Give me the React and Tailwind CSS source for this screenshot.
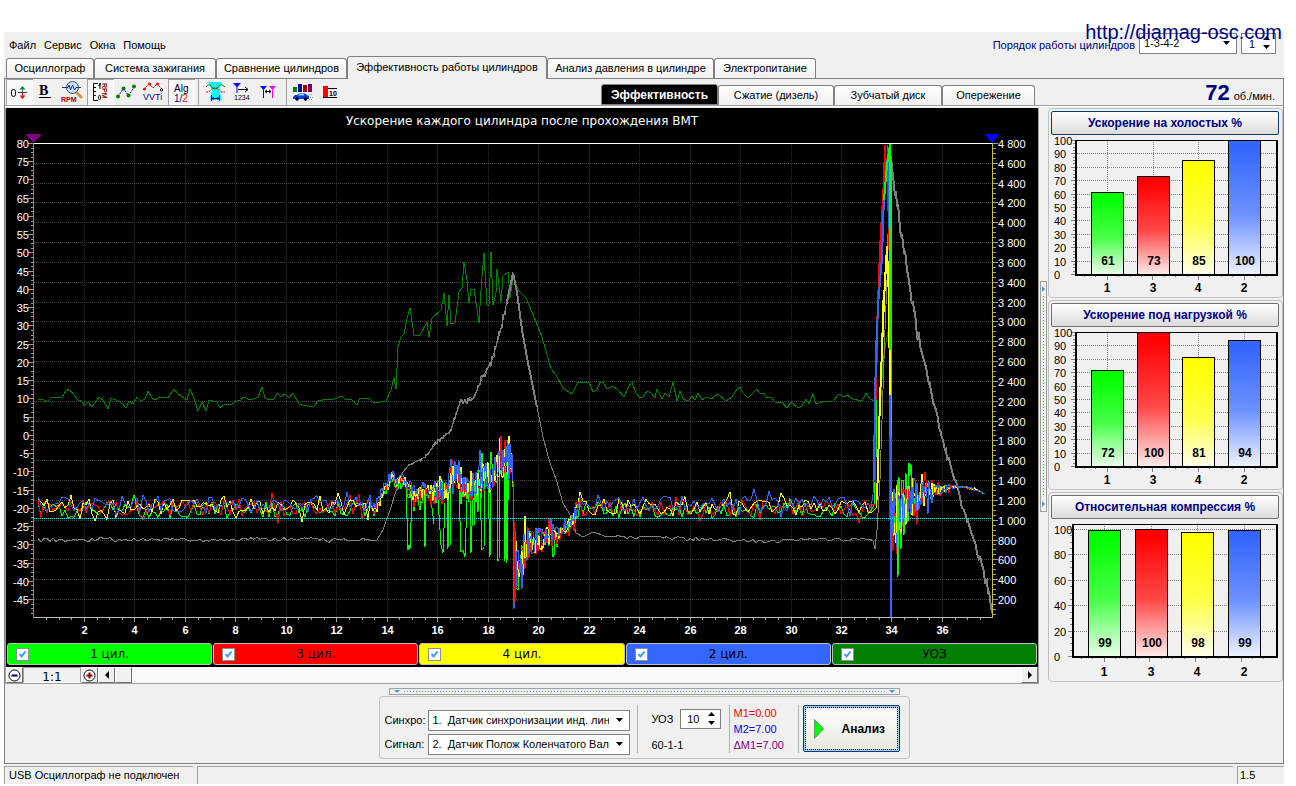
const COLORS = {
  green: '#00ff00',
  red: '#ff0000',
  yellow: '#ffff00',
  blue: '#3366ff',
  advance: '#008000',
  rpm: '#808080'
};

// Repeatable noise, so that every render draws the same signal
const createRandom = (seed) => {
  let state = seed;
  return () => {
    state = (state * 16807) % 2147483647;
    return state / 2147483647;
  };
};

// Linear interpolation between keys of the form [x, mean, amplitude]
const interpolate = (keys, x) => {
  let i = 1;
  while (i < keys.length - 1 && keys[i][0] < x) i += 1;
  const a = keys[i - 1];
  const b = keys[i];
  const t = Math.min(1, Math.max(0, (x - a[0]) / (b[0] - a[0])));
  return [a[1] + (b[1] - a[1]) * t, a[2] + (b[2] - a[2]) * t];
};

const buildNoise = (seed, keys, step) => {
  const random = createRandom(seed);
  const points = [];
  const end = keys[keys.length - 1][0];
  for (let x = keys[0][0]; x <= end; x += step) {
    const [mean, amp] = interpolate(keys, x);
    // mostly small moves and now and then a spike
    const r = random() * 2 - 1;
    const spike = random() > 0.86 ? 1.7 : 0.9;
    points.push(`${x.toFixed(1)},${(mean + r * amp * spike).toFixed(1)}`);
  }
  return points.join(' ');
};

const idle = [[38, 507, 9], [368, 507, 9]];
const rise = [
  [370, 506, 5], [374, 511, 4], [382, 494, 5], [393, 474, 5], [397, 486, 4], [400, 478, 4], [408, 488, 7],
  [418, 497, 10], [425, 491, 8], [437, 491, 9], [448, 492, 10], [451, 470, 16], [457, 475, 14], [463, 486, 10],
  [470, 491, 12], [477, 484, 17], [485, 475, 18], [492, 479, 18], [498, 464, 16], [512, 462, 18]
];
const fall = [
  [513, 500, 20], [514, 560, 36], [517, 565, 30], [521, 560, 24], [527, 545, 21], [537, 541, 13], [550, 535, 12],
  [557, 536, 9], [567, 526, 7], [573, 521, 7], [578, 508, 8]
];
const load = [[580, 507, 9], [873, 507, 9]];
const settle = [
  [892, 530, 34], [896, 518, 46], [900, 510, 40], [905, 500, 32], [912, 498, 24], [920, 496, 16], [928, 492, 13],
  [935, 490, 7], [945, 488, 4], [955, 487, 2], [965, 487, 1], [975, 489, 1], [985, 494, 0]
];

const shift = (keys, dy) => keys.map(([x, mean, amp]) => [x, mean + dy, amp]);

const buildCylinder = (seed, dy, peak) => [
  buildNoise(seed, shift(idle, dy), 3),
  buildNoise(seed + 11, shift(rise, dy), 1),
  buildNoise(seed + 23, shift(fall, dy), 1),
  buildNoise(seed + 37, shift(load, dy), 3),
  peak,
  buildNoise(seed + 53, settle, 1)
].join(' ');

const cylinderCurves = [
  {
    color: COLORS.green,
    points: buildCylinder(7411, 3, '874,505 876,460 877,345 880,260 882,245 883,200 885,190 887,160 889,200 890,143 891,160 891,540')
  },
  {
    color: COLORS.red,
    points: buildCylinder(1973, 1, '875,505 876,400 877,330 879,290 880,245 883,225 884,180 885,145 887,170 889,250 890,520 891,603')
  },
  {
    color: COLORS.yellow,
    points: buildCylinder(3019, 0, '876,508 878,470 880,400 883,300 884,290 886,255 887,246 889,290 890,397 891,520')
  },
  {
    color: COLORS.blue,
    points: buildCylinder(5227, -3, '873,494 875,392 876,340 878,305 881,258 883,195 885,182 886,160 887,175 888,145 890,300 891,617')
  }
];

// Ignition failures of the first cylinder: short drops under load
const dropouts = [
  '406,485 408,550 409,545 410,549 412,496', '424,492 425,547 426,495', '438,500 441,545 443,553 445,503',
  '447,490 448,549 449,480', '450,470 450,545', '459,490 461,552 463,550 465,557 467,500', '470,490 471,553 473,500',
  '480,490 482,550 484,548 485,470', '488,480 490,557 491,480', '497,470 498,560 499,560 500,468',
  '504,450 505,561 506,470 507,563 508,440 509,500', '474,480 475,525', '431,500 434,524'
];

const advancePoints =
  '38,399 43,399 47,402 51,398 62,397 66,391 69,389 74,395 78,400 82,401 84,406 88,402 92,407 99,397 103,400 108,409 ' +
  '111,398 118,401 123,404 126,408 129,401 133,404 137,397 141,401 145,399 148,391 152,398 155,400 160,397 168,398 ' +
  '174,389 178,394 187,400 190,389 194,398 198,411 202,402 206,411 209,400 217,402 220,408 224,405 232,404 237,401 ' +
  '241,400 243,397 251,400 258,397 262,387 265,398 269,400 274,399 277,393 281,397 285,394 289,398 293,393 299,404 ' +
  '307,406 314,406 318,401 327,399 334,399 342,396 345,399 352,400 357,405 360,398 369,398 374,403 386,401 391,390 ' +
  '394,378 396,389 398,347 401,337 404,334 407,318 410,308 414,335 420,335 427,322 429,337 432,318 441,310 444,293 ' +
  '447,326 449,295 451,324 455,323 459,292 462,288 464,262 467,280 469,303 471,289 474,289 479,323 481,290 484,253 ' +
  '487,305 489,305 491,252 493,305 496,293 497,269 501,302 503,276 508,272 510,298 513,278 519,291 526,298 532,312 ' +
  '542,337 551,369 556,375 563,388 572,394 578,382 589,382 593,392 597,390 600,382 603,382 607,389 613,386 618,390 ' +
  '624,397 629,386 632,382 636,393 640,398 643,397 647,391 651,393 655,398 657,389 662,399 665,393 669,397 673,382 ' +
  '677,401 680,391 683,399 688,401 692,396 695,400 698,393 702,400 707,397 711,399 718,394 726,401 732,397 737,389 ' +
  '740,387 743,393 748,398 757,389 760,393 764,393 767,398 771,397 775,402 782,402 787,408 791,402 798,408 802,406 ' +
  '806,399 809,404 813,394 816,404 826,401 833,401 839,394 844,397 847,395 853,399 862,401 866,393 870,399 875,401 ' +
  '877,414 879,414 881,396 883,362 886,342 888,332 890,325';

const rpmPoints = [
  buildNoise(811, [[38, 540, 2], [372, 539, 2]], 3),
  '377,540 383,530 390,510 397,488 403,472 408,466 413,463 425,457 438,441 450,432 460,403 462,400 463,404 465,399 ' +
    '467,404 469,398 471,401 474,398 482,378 491,363 500,333 507,302 513,273 517,292 522,330 528,363 537,407 543,437 ' +
    '550,463 557,482 563,503 572,518 576,533 583,537 593,532',
  buildNoise(977, [[597, 535, 2], [660, 538, 2], [740, 540, 2], [770, 542, 2], [790, 539, 2], [873, 540, 2]], 3),
  '875,549 877,530 880,480 882,420 885,330 887,280 890,143 891,159'
].join(' ');

// The thicker parts, where the speed ripples around its trend
const runUpPoints = buildNoise(
  607,
  [
    [408, 466, 2], [425, 457, 2], [438, 441, 3], [450, 432, 2], [460, 403, 3], [462, 401, 4], [474, 398, 3],
    [482, 378, 3], [491, 363, 5], [500, 333, 6], [507, 302, 8], [513, 275, 4]
  ],
  1
);

const coastPoints = buildNoise(
  1291,
  [
    [891, 159, 3], [895, 190, 7], [900, 223, 7], [905, 257, 6], [912, 299, 6], [918, 335, 5], [927, 372, 4],
    [935, 409, 4], [943, 440, 4], [950, 463, 3], [957, 487, 3], [962, 506, 2], [972, 533, 3], [980, 561, 5],
    [987, 585, 8], [992, 613, 2]
  ],
  1
);

const toX = (time) => Math.round(33.5 + time * 25.235) + 0.5;
const toY = (value) => Math.round(143 + (80 - value) * 3.648) + 0.5;
const rpmToY = (rpm) => Math.round(143 + (4800 - rpm) * 0.09913) + 0.5;
const range = (from, to, step) => {
  const list = [];
  for (let v = from; v <= to + 0.001; v += step) list.push(v);
  return list;
};
const formatRpm = (rpm) => (rpm >= 1000 ? `${Math.floor(rpm / 1000)} ${String(rpm % 1000).padStart(3, '0')}` : rpm);

function MainChart() {
  return (
    <svg viewBox="6 108 1032 535" className="block w-full bg-black font-['Liberation_Sans',sans-serif]">
      <text x="522" y="125" textAnchor="middle" fill="#fff" className="text-[12px] font-['DejaVu_Sans',sans-serif]">
        Ускорение каждого цилиндра после прохождения ВМТ
      </text>

      {/* Grid */}
      <g stroke="#484848" strokeDasharray="1 1" shapeRendering="crispEdges">
        {range(200, 4600, 200).map((v) => (
          <line key={v} x1="34" x2="992" y1={rpmToY(v)} y2={rpmToY(v)} />
        ))}
      </g>
      <g stroke="#303030" strokeDasharray="1 1" shapeRendering="crispEdges">
        {range(2, 36, 2).map((v) => (
          <line key={v} x1={toX(v)} x2={toX(v)} y1="144" y2="617" />
        ))}
      </g>

      {/* Curves */}
      <g fill="none" shapeRendering="crispEdges">
        <polyline points={advancePoints} stroke={COLORS.advance} />
        <polyline points={rpmPoints} stroke={COLORS.rpm} />
        <polyline points={runUpPoints} stroke={COLORS.rpm} />
        <polyline points="507,302 513,273 517,292 522,330 528,363 537,407" stroke={COLORS.rpm} strokeWidth="2" />
        <polyline points={coastPoints} stroke={COLORS.rpm} strokeWidth="2" />
        {dropouts.map((points) => (
          <polyline key={points} points={points} stroke={COLORS.green} />
        ))}
        {cylinderCurves.map((curve) => (
          <polyline key={curve.color} points={curve.points} stroke={curve.color} />
        ))}
        <polyline points="500,470 501,436 502,460" stroke={COLORS.red} />
        <polyline points="514,520 515,602 516,560" stroke={COLORS.red} />
        <polyline points="876,400 877,330 880,250 884,180 885,145" stroke={COLORS.red} strokeWidth="2" />
        <polyline points="874,480 875,392 878,305 882,258 884,195 888,160 890,250 891,617" stroke={COLORS.blue} strokeWidth="2" />
        <polyline points="877,500 880,400 884,300 887,248 889,300 890,395" stroke={COLORS.yellow} strokeWidth="2" />
        <polyline points="884,200 887,165 890,145 890,350" stroke={COLORS.green} strokeWidth="2" />
        <polyline points="897,480 898,577 899,500" stroke={COLORS.green} />
        <polyline points="923,490 925,472 927,488" stroke={COLORS.red} />
        <line x1="34" x2="992" y1="518.5" y2="518.5" stroke="#00ffff" strokeDasharray="1 1" />
      </g>

      {/* Axes */}
      <g shapeRendering="crispEdges" stroke="#a0a0a0">
        <line x1="34" x2="993" y1="143.5" y2="143.5" stroke="#fff" />
        <line x1="33" x2="993" y1="617.5" y2="617.5" stroke="#c0c0c0" />
        {range(-48.75, 80, 1.25).map((v) => (
          <line key={v} x1={v % 5 === 0 ? 28 : 31} x2="33" y1={toY(v)} y2={toY(v)} />
        ))}
        {range(50, 4800, 50).map((v) => (
          <line key={v} x1="993" x2={v % 200 === 0 ? 998 : 996} y1={rpmToY(v)} y2={rpmToY(v)} />
        ))}
        {range(0.5, 37.5, 0.5).map((v) => (
          <line key={v} x1={toX(v)} x2={toX(v)} y1="618" y2={v % 2 === 0 ? 622 : 620} />
        ))}
        <line x1="33.5" x2="33.5" y1="143" y2="618" stroke="#46b446" />
        <line x1="992.5" x2="992.5" y1="143" y2="618" stroke="#c8c03c" />
      </g>
      <polygon points="25,134 42,134 33.5,143" fill="#800080" />
      <polygon points="984,134 1000,134 992,143" fill="#0000ff" />

      {/* Scales */}
      <g fill="#fff" className="text-[11px]">
        {range(-45, 80, 5).map((v) => (
          <text key={v} x="29" y={toY(v) + 4} textAnchor="end">{v}</text>
        ))}
        {range(200, 4800, 200).map((v) => (
          <text key={v} x="998" y={rpmToY(v) + 4}>{formatRpm(v)}</text>
        ))}
        {range(2, 36, 2).map((v) => (
          <text key={v} x={toX(v)} y="634" textAnchor="middle" fontWeight="bold">{v}</text>
        ))}
      </g>
    </svg>
  );
}

const legend = [
  { name: '1 цил.', className: 'bg-[#00ff00]' },
  { name: '3 цил.', className: 'bg-[#ff0000]' },
  { name: '4 цил.', className: 'bg-[#ffff00]' },
  { name: '2 цил.', className: 'bg-[#3366ff]' },
  { name: 'УОЗ', className: 'bg-[#008000]' }
];

function Legend() {
  return (
    <div className="grid grid-cols-5 gap-px bg-black px-px pb-0.5">
      {legend.map((item) => (
        <label
          key={item.name}
          className={`relative flex h-[22px] items-center justify-center rounded-[3px] border border-[#c0c0c0] text-[12px] text-black font-['DejaVu_Sans',sans-serif] ${item.className}`}
        >
          <input
            type="checkbox"
            defaultChecked
            className="peer absolute left-2 size-[13px] appearance-none border border-[#8e8f8f] bg-white"
          />
          <svg viewBox="0 0 13 13" className="pointer-events-none absolute left-2 hidden size-[13px] peer-checked:block">
            <path d="M3.5 6 L5.5 8.5 L9.5 3.5" fill="none" stroke="#3399ff" strokeWidth="2" />
          </svg>
          {item.name}
        </label>
      ))}
    </div>
  );
}

const raised = 'border border-t-white border-l-white border-r-[#707070] border-b-[#707070] bg-[#f0f0f0]';

function ScrollRow() {
  return (
    <div className="flex h-[17px] border-b border-[#a0a0a0] bg-[#f8f8f8]">
      <button aria-label="Уменьшить" className={`flex w-[17px] items-center justify-center ${raised}`}>
        <svg viewBox="0 0 13 13" className="size-[13px] shrink-0">
          <circle cx="6.5" cy="6.5" r="5.5" fill="#fff" stroke="#000" />
          <path d="M3.5 6.5 h6" stroke="#000080" strokeWidth="2" />
        </svg>
      </button>
      <output className="w-[58px] border border-t-[#a0a0a0] border-l-[#a0a0a0] border-r-[#a0a0a0] border-b-white bg-[#f0f0f0] text-center text-[12px] leading-[18px] font-['DejaVu_Sans',sans-serif]">
        1:1
      </output>
      <button aria-label="Увеличить" className={`flex w-[17px] items-center justify-center ${raised}`}>
        <svg viewBox="0 0 13 13" className="size-[13px] shrink-0">
          <circle cx="6.5" cy="6.5" r="5.5" fill="#fff" stroke="#000" />
          <path d="M3.5 6.5 h6 M6.5 3.5 v6" stroke="#800000" strokeWidth="2" />
        </svg>
      </button>
      <button aria-label="Влево" className={`flex w-[17px] items-center justify-center ${raised}`}>
        <svg viewBox="0 0 4 8" className="h-2 w-1"><path d="M4 0 V8 L0 4 Z" /></svg>
      </button>
      <div className={`w-[17px] ${raised}`} />
      <button aria-label="Вправо" className={`ml-auto flex w-[17px] items-center justify-center ${raised}`}>
        <svg viewBox="0 0 4 8" className="h-2 w-1"><path d="M0 0 V8 L4 4 Z" /></svg>
      </button>
    </div>
  );
}

const BAR_COLORS = [COLORS.green, COLORS.red, COLORS.yellow, COLORS.blue];
const CYLINDERS = [1, 3, 4, 2];

const miniCharts = [
  { id: 'idle', title: 'Ускорение на холостых %', values: [61, 73, 85, 100], step: 10, left: 26, centers: [58, 104, 149, 195], zero: 139, hundred: 5, focused: true },
  { id: 'load', title: 'Ускорение под нагрузкой %', values: [72, 100, 81, 94], step: 10, left: 26, centers: [58, 104, 149, 195], zero: 139, hundred: 5 },
  { id: 'compression', title: 'Относительная компрессия %', values: [99, 100, 98, 99], step: 20, left: 23, centers: [55, 102, 148, 195], zero: 137, hundred: 10 }
];

function BarChart({ chart }) {
  const { id, left, centers, zero, hundred, step, values } = chart;
  const top = 5;
  const y = (v) => Math.round(zero - (v * (zero - hundred)) / 100) + 0.5;
  return (
    <svg viewBox="0 0 233 160" className="block w-full font-['Liberation_Sans',sans-serif]">
      <defs>
        {BAR_COLORS.map((color, i) => (
          <linearGradient key={color} id={`${id}-${i}`} x1="0" x2="0" y1="0" y2="1">
            <stop offset="0.05" stopColor={color} />
            <stop offset="0.55" stopColor={color} stopOpacity="0.72" />
            <stop offset="1" stopColor={color} stopOpacity="0.08" />
          </linearGradient>
        ))}
      </defs>
      <g stroke="#808080" shapeRendering="crispEdges">
        <g strokeDasharray="1 1">
          {range(step, 100, step).map((v) => (
            <line key={v} x1={left} x2="227" y1={y(v)} y2={y(v)} />
          ))}
          {centers.map((c) => (
            <line key={c} x1={c + 0.5} x2={c + 0.5} y1={top} y2={zero} />
          ))}
        </g>
        {range(0, 100, step).map((v) => (
          <line key={v} x1={left - 4} x2={left} y1={y(v)} y2={y(v)} />
        ))}
        {range(0, 100, step / 4).map((v) => (
          <line key={v} x1={left - 2} x2={left} y1={y(v)} y2={y(v)} />
        ))}
        {range(0, 16, 1).map((n) => (
          <line key={n} x1={centers[0] - 22.5 + n * 11.4} x2={centers[0] - 22.5 + n * 11.4} y1={zero + 1} y2={n % 4 === 2 ? zero + 6 : zero + 3} />
        ))}
      </g>
      <rect x={left + 0.5} y={top + 0.5} width={227 - left} height={zero - top} fill="none" stroke="#000" shapeRendering="crispEdges" />
      {values.map((v, i) => (
        <g key={centers[i]}>
          <rect x={centers[i] - 15.5} y={y(v)} width="32" height={zero + 0.5 - y(v)} fill="#fff" />
          <rect x={centers[i] - 15.5} y={y(v)} width="32" height={zero + 0.5 - y(v)} fill={`url(#${id}-${i})`} stroke="#000" shapeRendering="crispEdges" />
          <text x={centers[i] + 1} y={zero - 9} textAnchor="middle" fontWeight="bold" className="text-[12px]">{v}</text>
          <text x={centers[i]} y={zero + (step === 20 ? 20 : 18)} textAnchor="middle" fontWeight="bold" className="text-[12px]">{CYLINDERS[i]}</text>
        </g>
      ))}
      <path d={`M${left + 0.5} ${top} V${zero + 0.5} H227.5 V${top}`} fill="none" stroke="#000" strokeWidth="2" shapeRendering="crispEdges" />
      <g className="text-[11px]">
        {range(0, 100, step).map((v) => (
          <text key={v} x="5" y={y(v) + 4}>{v}</text>
        ))}
      </g>
    </svg>
  );
}

function Sidebar() {
  return (
    <aside className="flex w-[235px] flex-col gap-0.5">
      {miniCharts.map((chart) => (
        <section key={chart.id} className="h-[190px] rounded border border-[#c0c0c0] pt-0.5">
          <button
            className={`mx-0.5 block h-6 w-[228px] rounded-xs border bg-linear-to-b from-white to-[#dcdcdc] text-[12px] font-bold text-[#000080] ${
              chart.focused ? 'border-[#003c74]' : 'border-[#707070]'
            }`}
          >
            {chart.title}
          </button>
          <BarChart chart={chart} />
        </section>
      ))}
    </aside>
  );
}

/* Toolbar icons share one 27x26 canvas */
const icon = 'block h-[26px] w-[27px]';

const icons = [
  {
    label: 'Ноль', pressed: true,
    svg: (
      <svg viewBox="0 0 27 26" className={icon}>
        <rect x="5.5" y="10.5" width="4" height="7" rx="2" fill="none" stroke="#000" />
        <path d="M12 13.5 h9" stroke="#404040" />
        <path d="M16.5 7 L19.5 10.5 H17 V13 H16 V10.5 H13.5 Z" fill="#008040" />
        <path d="M16.5 20 L19.5 16.5 H17 V14 H16 V16.5 H13.5 Z" fill="#ff0000" />
      </svg>
    )
  },
  {
    label: 'Полужирный',
    svg: (
      <svg viewBox="0 0 27 26" className={icon}>
        <text x="6" y="16" className="text-[14px] font-bold font-['Liberation_Serif',serif]">B</text>
        <path d="M6 18.5 H18" stroke="#000" strokeWidth="1" shapeRendering="crispEdges" />
      </svg>
    )
  },
  {
    label: 'RPM',
    svg: (
      <svg viewBox="0 0 27 26" className={icon}>
        <path d="M16 13 L22 19" stroke="#d09840" strokeWidth="3" />
        <circle cx="12.5" cy="8.5" r="6" fill="#c8e4ff" stroke="#404850" />
        <path d="M2 8.5 H8 L9 6 L10.5 11 L12.5 6 L14.5 11 L16 8.5 H21" fill="none" stroke="#203090" />
        <text x="1" y="23" fill="#a00000" className="text-[7px] font-bold font-['Liberation_Sans',sans-serif]">RPM</text>
      </svg>
    )
  },
  {
    label: 'Шкала RPM', pressed: true,
    svg: (
      <svg viewBox="0 0 27 26" className={icon}>
        <path d="M11 4.5 H6.5 V21.5 H11 M7 8.5 h2 M7 12.5 h2 M7 16.5 h2" fill="none" stroke="#000" />
        <path d="M11.5 6.5 h1.5 V4 V10" fill="none" stroke="#000" />
        <rect x="11.5" y="16.5" width="2" height="4" rx="1" fill="none" stroke="#000" />
        <text transform="translate(15 4) rotate(90)" fill="#a00000" className="text-[7px] font-bold font-['Liberation_Sans',sans-serif]">RPM</text>
      </svg>
    )
  },
  {
    label: 'Точки',
    svg: (
      <svg viewBox="0 0 27 26" className={icon}>
        <path d="M4 17.5 L9.5 9.5 L14.5 16.5 L20.5 7.5" fill="none" stroke="#0000ff" strokeDasharray="2 1" />
        <g fill="#008000">
          <circle cx="4" cy="17.5" r="2" /><circle cx="9.5" cy="9.5" r="2" />
          <circle cx="14.5" cy="16.5" r="2" /><circle cx="20" cy="7.5" r="2" />
        </g>
      </svg>
    )
  },
  {
    label: 'VVTi',
    svg: (
      <svg viewBox="0 0 27 26" className={icon}>
        <path d="M3 10 L8 5 L12 9 L16 5 L21 10" fill="none" stroke="#d00000" strokeDasharray="2 1" />
        <g fill="#ff0000"><circle cx="3.5" cy="10" r="1.5" /><circle cx="8.5" cy="5" r="1.5" /><circle cx="16.5" cy="5" r="1.5" /></g>
        <circle cx="20.5" cy="11" r="1.2" fill="#fff" stroke="#000" />
        <text x="2" y="21" fill="#000080" className="text-[9px] font-['Liberation_Sans',sans-serif]">VVTi</text>
      </svg>
    )
  },
  {
    label: 'Алгоритм', pressed: true,
    svg: (
      <svg viewBox="0 0 27 26" className={icon}>
        <g className="text-[10px] font-['Liberation_Sans',sans-serif]">
          <text x="6" y="13" fill="#000">Alg</text>
          <text x="6" y="23" fill="#000080">1/<tspan fill="#ff0000">2</tspan></text>
        </g>
      </svg>
    )
  },
  null,
  {
    label: 'Фаза',
    svg: (
      <svg viewBox="0 0 27 26" className={icon}>
        <path d="M6 3 H20 L17 11 L20 21 H8 L10 11 Z" fill="#00ffff" />
        <path d="M4 8 Q7 4 9 7 Q13 13 17 7 Q19 4 23 8" fill="none" stroke="#008000" />
        <path d="M4 13 H7 Q9 10 11 9 H15 Q17 10 19 13 H23" fill="none" stroke="#ff0000" strokeDasharray="2 1" />
        <path d="M9.5 16 V22 M17.5 16 V22 M10 19.5 H17 M12 18 l-2 1.5 l2 1.5 M15 18 l2 1.5 l-2 1.5" fill="none" stroke="#000080" />
      </svg>
    )
  },
  {
    label: 'Метки',
    svg: (
      <svg viewBox="0 0 27 26" className={icon}>
        <path d="M4 4 H12 L8.5 8 V14 H7.5 V8 Z" fill="#0000ff" />
        <path d="M9 10.5 H19 M16 8 L19 10.5 L16 13" fill="none" stroke="#000" />
        <text x="5" y="21" className="text-[7px] font-['Liberation_Sans',sans-serif]">1234</text>
      </svg>
    )
  },
  {
    label: 'Маркеры',
    svg: (
      <svg viewBox="0 0 27 26" className={icon}>
        <path d="M4 7 H11 L8 10.5 V19 H7 V10.5 Z" fill="#0000ff" />
        <path d="M13 7 H20 L17 10.5 V19 H16 V10.5 Z" fill="#ff00ff" />
        <path d="M9 12.5 H15 M11 11 l-2 1.5 l2 1.5 M13 11 l2 1.5 l-2 1.5" fill="none" stroke="#000" />
      </svg>
    )
  },
  null,
  {
    label: 'Разгон',
    svg: (
      <svg viewBox="0 0 27 26" className={icon}>
        <path d="M3 8 h4 v5 h-4 z" fill="#008000" />
        <path d="M8 5 h4 v8 h-4 z" fill="#0000a0" />
        <path d="M13 6 h4 v7 h-4 z" fill="#a00000" />
        <path d="M18 5 h4 v8 h-4 z" fill="#600060" />
        <path d="M3 18 L5 16 H7 L9 14.5 H15 L17 16 L19 17 V20 H3 Z" fill="#0040e0" />
        <path d="M9 15 h5 v1.5 h-6 z" fill="#80d0ff" />
        <circle cx="7" cy="20" r="1.8" fill="#000" /><circle cx="15.5" cy="20" r="1.8" fill="#000" />
        <path d="M19 15.5 h4 M20 18.5 h4 M19 20.5 h3" stroke="#909090" strokeDasharray="1 1" />
      </svg>
    )
  },
  {
    label: 'Десять',
    svg: (
      <svg viewBox="0 0 27 26" className={icon}>
        <path d="M6 7 h5 v12 h-5 z" fill="#ff0000" />
        <path d="M6 18.5 H20 M11 9.5 H20" stroke="#000" shapeRendering="crispEdges" />
        <text x="12" y="17" fill="#000" className="text-[7px] font-bold font-['Liberation_Sans',sans-serif]">10</text>
      </svg>
    )
  }
];

function Toolbar() {
  return (
    <div role="toolbar" className="flex pl-px">
      {icons.map((item, i) =>
        item ? (
          <button
            key={item.label}
            aria-label={item.label}
            className={`flex h-[26px] w-[27px] items-center justify-center ${
              item.pressed ? 'bg-[#f8f8f8] shadow-[inset_1px_1px_0_#a0a0a0,inset_-1px_-1px_0_#fff]' : ''
            }`}
          >
            {item.svg}
          </button>
        ) : (
          <span key={i} className="mx-[3px] w-px bg-[#a0a0a0]" />
        )
      )}
    </div>
  );
}

const tabBase = 'h-5 rounded-t-[3px] border border-b-0 border-[#808080] bg-linear-to-b from-white to-[#f0f0f0]';
const tabs = [
  { name: 'Осциллограф', width: 'w-[88px]' },
  { name: 'Система зажигания', width: 'w-[122px]' },
  { name: 'Сравнение цилиндров', width: 'w-[131px]' },
  { name: 'Эффективность работы цилиндров', width: 'w-[200px]', active: true },
  { name: 'Анализ давления в цилиндре', width: 'w-[167px]' },
  { name: 'Электропитание', width: 'w-[102px]' }
];
const subTabs = [
  { name: 'Эффективность', width: 'w-[117px]', active: true },
  { name: 'Сжатие (дизель)', width: 'w-[116px]' },
  { name: 'Зубчатый диск', width: 'w-[108px]' },
  { name: 'Опережение', width: 'w-[93px]' }
];

function SpinArrows() {
  return (
    <svg viewBox="0 0 7 15" className="pointer-events-none absolute right-1.5 top-[2px] h-[15px] w-[7px]">
      <path d="M0 5 L3.5 1 L7 5 Z M0 10 L3.5 14 L7 10 Z" />
    </svg>
  );
}

const numberInput =
  'h-full w-full appearance-none border border-[#808080] bg-white pr-5 text-right [appearance:textfield] [&::-webkit-inner-spin-button]:appearance-none';

function SelectBox({ id, value, options, className }) {
  return (
    <div className={`relative ${className}`}>
      <select
        id={id}
        defaultValue={value}
        className="h-full w-full appearance-none overflow-hidden border border-[#808080] bg-white pr-5 pl-1 text-[11px]"
      >
        {options.map((option) => (
          <option key={option} value={option}>{option}</option>
        ))}
      </select>
      <svg viewBox="0 0 7 4" className="pointer-events-none absolute top-2 right-[7px] h-1 w-[7px]">
        <path d="M0 0 H7 L3.5 4 Z" />
      </svg>
    </div>
  );
}

function Header() {
  return (
    <header>
      <div className="flex h-[23px] justify-between">
        <nav className="flex gap-2 pt-[5px] pl-[5px] text-[11px] leading-4">
          {['Файл', 'Сервис', 'Окна', 'Помощь'].map((item) => (
            <a key={item} href="#">{item}</a>
          ))}
        </nav>
        <div className="relative flex pt-px pr-2 text-[11px]">
          <label htmlFor="order" className="pt-1 pr-1 text-[#000080]">Порядок работы цилиндров</label>
          <SelectBox id="order" value="1-3-4-2" options={['1-3-4-2', '1-2-4-3']} className="h-[21px] w-[98px]" />
          <div className="relative ml-1 h-[21px] w-[35px]">
            <input type="number" aria-label="Номер цилиндра" defaultValue={1} className={numberInput} />
            <SpinArrows />
          </div>
          <a href="#" className="absolute -top-3 right-0.5 text-[20px] leading-6 text-[#000080]">http://diamag-osc.com</a>
        </div>
      </div>
      <div role="tablist" className="flex h-[23px] items-end pl-0.5">
        {tabs.map((tab) => (
          <button
            key={tab.name}
            role="tab"
            aria-selected={!!tab.active}
            className={`text-[11px] whitespace-nowrap ${tab.width} ${
              tab.active
                ? 'relative z-10 -mb-px h-[23px] rounded-t-[3px] border border-b-0 border-[#808080] bg-[#f0f0f0] pb-0.5'
                : tabBase
            }`}
          >
            {tab.name}
          </button>
        ))}
      </div>
    </header>
  );
}

function ControlPanel() {
  const signals = ['1.\u00a0\u00a0Датчик синхронизации инд. линия', '2.\u00a0\u00a0Датчик Полож Коленчатого Вала'];
  return (
    <div className="mx-auto mt-1 w-[531px] text-[11px]">
      <div className="mx-auto flex h-[7px] w-[511px] items-center border border-[#a0a0a0] px-1">
        <svg viewBox="0 0 6 3" className="h-[3px] w-1.5"><path d="M0 0 H6 L3 3 Z" fill="#3399ff" /></svg>
        <span className="mx-1 h-px flex-1 bg-[repeating-linear-gradient(90deg,#3399ff_0_1px,transparent_1px_3px)]" />
        <svg viewBox="0 0 6 3" className="h-[3px] w-1.5"><path d="M0 0 H6 L3 3 Z" fill="#3399ff" /></svg>
      </div>
      <div className="mt-px flex h-[63px] rounded border border-[#c0c0c0] pl-[5px]">
        <div className="mt-3 grid h-[46px] grid-cols-[43px_202px] content-between items-center pt-px">
          <label htmlFor="sync">Синхро:</label>
          <SelectBox id="sync" value={signals[0]} options={signals} className="h-[21px]" />
          <label htmlFor="signal">Сигнал:</label>
          <SelectBox id="signal" value={signals[1]} options={signals} className="h-[21px]" />
        </div>
        <div className="mt-2 ml-[7px] h-[48px] w-[92px] border-l border-[#b0b0b0] pl-3.5">
          <div className="mt-1 flex items-center">
            <label htmlFor="advance" className="w-7">УОЗ</label>
            <div className="relative h-5 w-[41px]">
              <input id="advance" type="number" defaultValue={10} className={numberInput} />
              <SpinArrows />
            </div>
          </div>
          <p className="mt-2 leading-4">60-1-1</p>
        </div>
        <div className="mt-2 h-[48px] w-[69px] border-l border-[#b0b0b0] pl-1 leading-4">
          <p className="text-[#ff0000]">M1=0.00</p>
          <p className="text-[#0000ff]">M2=7.00</p>
          <p className="text-[#800080]">ΔM1=7.00</p>
        </div>
        <div className="mt-2 h-[48px] border-l border-[#b0b0b0] pl-1">
          <button className="flex h-[47px] w-[97px] items-center rounded-xs border border-[#003c74] bg-linear-to-b from-white to-[#e8e8e0] p-px shadow-[inset_0_0_0_2px_#a8ccf0]">
            <span className="flex h-full w-full items-center border border-dotted border-black pl-2 text-[12px] font-bold">
              <svg viewBox="0 0 10 20" className="mr-[18px] h-5 w-2.5">
                <path d="M0.5 0.5 L9.5 10 L0.5 19.5 Z" fill="#00ff00" stroke="#60a060" />
              </svg>
              Анализ
            </span>
          </button>
        </div>
      </div>
    </div>
  );
}

export default function App() {
  return (
    <div className="min-h-screen bg-white pt-8 pr-3 pl-1 font-['Liberation_Sans',sans-serif] text-black">
      <div className="bg-[#f0f0f0]">
        <Header />
        <main className="border border-[#808080] pb-1">
          <div className="flex h-[27px] items-end border-b border-[#a0a0a0]">
            <div className="self-start"><Toolbar /></div>
            <div role="tablist" className="ml-auto flex items-end">
              {subTabs.map((tab) => (
                <button
                  key={tab.name}
                  role="tab"
                  aria-selected={!!tab.active}
                  className={`text-[11px] ${tab.width} ${
                    tab.active ? 'h-[21px] rounded-t-[3px] border border-[#808080] bg-black text-[12px] font-bold text-white' : tabBase
                  }`}
                >
                  {tab.name}
                </button>
              ))}
            </div>
            <p className="flex w-[248px] items-baseline justify-end pr-2 text-[11px]">
              <strong className="mr-1 text-[22px] leading-6 text-[#000080]">72</strong>об./мин.
            </p>
          </div>
          <div className="flex border-t border-white pt-px">
            <div className="min-w-0 flex-1 border-l border-[#a0a0a0]">
              <MainChart />
              <Legend />
              <ScrollRow />
            </div>
            <div className="flex w-[10px] items-center border-l border-[#a0a0a0] pl-px">
              <div className="flex h-[231px] w-[7px] flex-col items-center border border-[#a0a0a0] py-1">
                <svg viewBox="0 0 3 6" className="h-1.5 w-[3px]"><path d="M0 0 V6 L3 3 Z" fill="#3399ff" /></svg>
                <span className="my-1 w-px flex-1 bg-[repeating-linear-gradient(180deg,#3399ff_0_1px,transparent_1px_3px)]" />
                <svg viewBox="0 0 3 6" className="h-1.5 w-[3px]"><path d="M0 0 V6 L3 3 Z" fill="#3399ff" /></svg>
              </div>
            </div>
            <Sidebar />
          </div>
          <ControlPanel />
        </main>
        <footer className="mt-0.5 flex h-[18px] gap-1 text-[11px] leading-[17px] *:border-t *:border-l *:border-[#a0a0a0]">
          <span className="w-[189px] pl-1">USB Осциллограф не подключен</span>
          <span className="flex-1" />
          <span className="w-[47px] pl-0.5">1.5</span>
        </footer>
      </div>
    </div>
  );
}
